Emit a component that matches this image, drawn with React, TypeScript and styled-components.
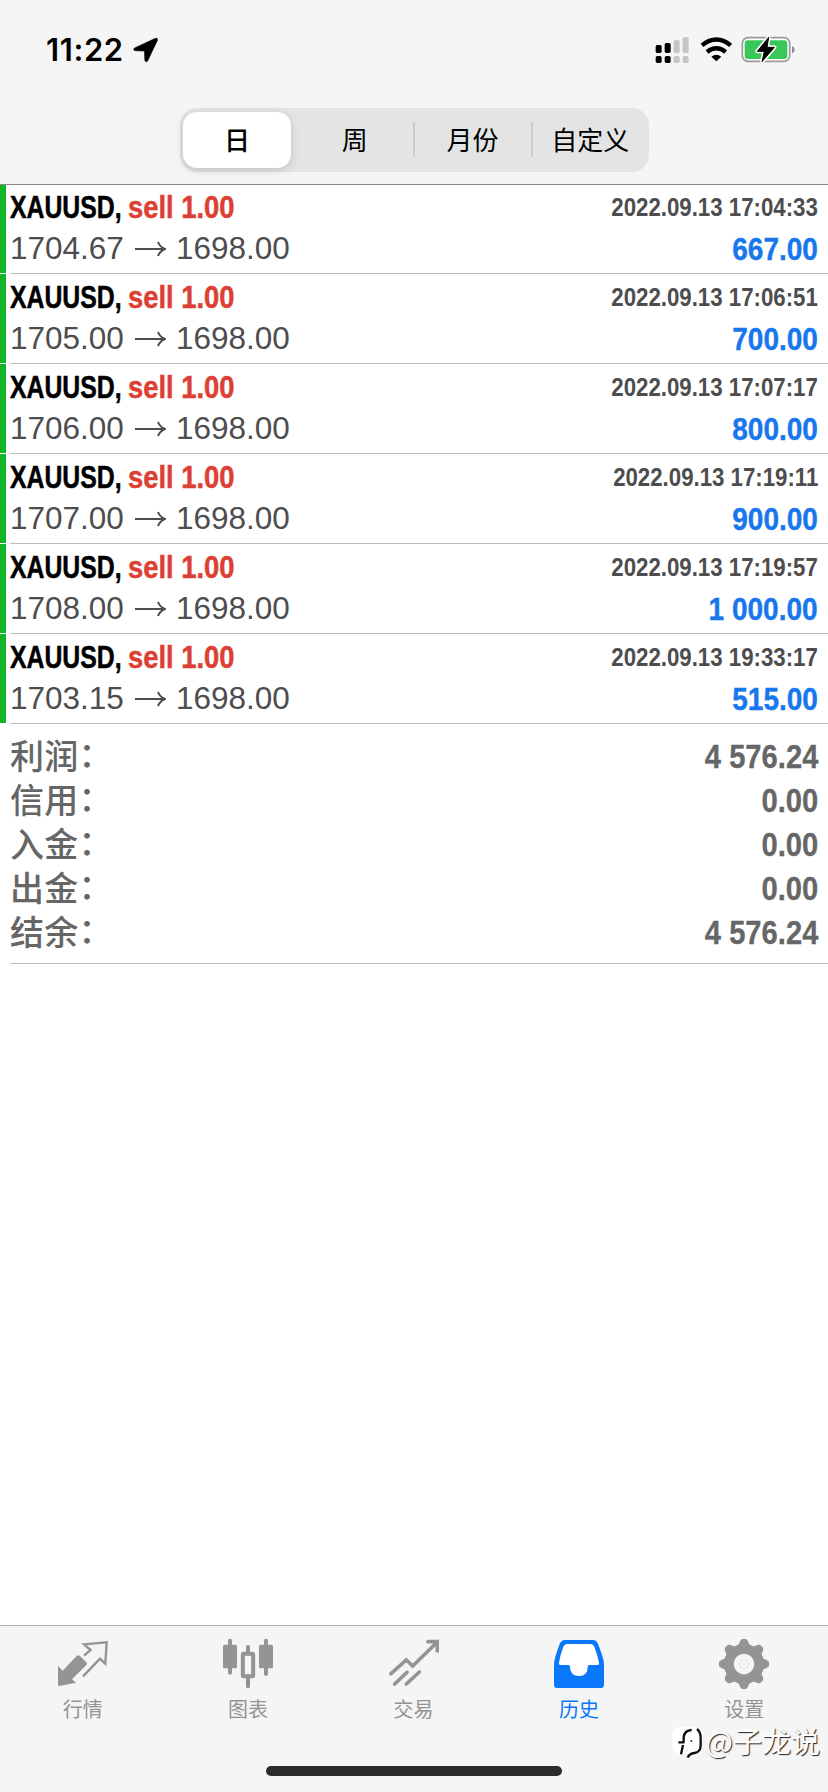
import React from "react";
import styled, { createGlobalStyle } from "styled-components";

const GlobalStyle = createGlobalStyle`
  * { box-sizing: border-box; }
  html, body { margin: 0; padding: 0; background: #fff; }
  body { font-family: "Liberation Sans", "Noto Sans CJK SC", sans-serif; }
`;

const sans = `"Liberation Sans", "Noto Sans CJK SC", sans-serif`;
const cjk = `"Noto Sans CJK SC", sans-serif`;

const Screen = styled.div`
  position: relative;
  display: flex;
  flex-direction: column;
  width: 828px;
  height: 1792px;
  overflow: hidden;
  background: #fff;
`;

const Header = styled.header`
  display: flex;
  flex-direction: column;
  align-items: center;
  height: 185px;
  margin-bottom: -1px;
  z-index: 1;
  flex: none;
  background: #f5f5f5;
  border-bottom: 1px solid #8b8b8b;
`;

const StatusBar = styled.div`
  display: flex;
  justify-content: space-between;
  align-items: center;
  width: 100%;
  height: 108px;
  padding: 0 33px 8px 46px;
`;

const StatusGroup = styled.div`
  display: flex;
  align-items: center;
`;

const Clock = styled.span`
  font: 600 31px/40px Inter, sans-serif;
  letter-spacing: 0.6px;
  color: #000;
  margin-right: 9px;
`;

const Segments = styled.div`
  display: flex;
  align-items: center;
  width: 469px;
  height: 64px;
  padding: 0 0 0 3px;
  border-radius: 17px;
  background: #e4e4e4;
`;

const Segment = styled.button<{ $active?: boolean; $divided?: boolean }>`
  display: flex;
  align-items: center;
  justify-content: center;
  position: relative;
  flex: ${(p) => (p.$active ? "0 0 108px" : "1 1 0")};
  height: 56px;
  padding: 0 0 3px 1px;
  border: 0;
  border-radius: 14px;
  background: ${(p) => (p.$active ? "#fff" : "transparent")};
  box-shadow: ${(p) => (p.$active ? "0 2px 8px rgba(0,0,0,.16)" : "none")};
  margin-right: ${(p) => (p.$active ? "5px" : "0")};
  font: ${(p) => (p.$active ? 500 : 400)} 26px/36px ${cjk};
  color: #000;

  &::before {
    content: "";
    display: ${(p) => (p.$divided ? "block" : "none")};
    position: absolute;
    left: 0;
    top: 10px;
    width: 2px;
    height: 35px;
    background: #cbcbcd;
  }
`;

const Deals = styled.ul`
  list-style: none;
  margin: 0;
  padding: 0;
`;

const Deal = styled.li`
  display: flex;
  height: 90px;
`;

const Marker = styled.span`
  width: 6px;
  height: 89px;
  margin-right: 4px;
  background: #12b428;
`;

const DealBody = styled.div`
  display: flex;
  justify-content: space-between;
  flex: 1;
  padding: 3px 10px 0 0;
  border-bottom: 1px solid #bcbcbe;
`;

const Column = styled.div<{ $end?: boolean }>`
  display: flex;
  flex-direction: column;
  align-items: ${(p) => (p.$end ? "flex-end" : "flex-start")};
`;

const Title = styled.div`
  display: flex;
  font: 700 32px/41px ${sans};
  white-space: nowrap;
  -webkit-text-stroke: 0.5px currentColor;
`;

const Ticker = styled.span`
  width: 118px;
  transform: scaleX(0.775);
  transform-origin: left;
  color: #000;
`;

const Side = styled.span`
  transform: scaleX(0.855);
  transform-origin: left;
  color: #dc3f34;
`;

const Prices = styled.div`
  display: flex;
  align-items: center;
  font: 400 31.5px/41px ${sans};
  color: #4d4d4f;
`;

const ArrowSvg = styled.svg`
  width: 31px;
  height: 16px;
  margin: 0 10px 0 11px;
`;

const DateText = styled.div`
  margin-top: 1px;
  font: 700 25.5px/39px ${sans};
  transform: scaleX(0.872);
  transform-origin: right;
  color: #4d4d4f;
`;

const Profit = styled.div`
  font: 700 32px/45px ${sans};
  transform: scaleX(0.875);
  transform-origin: right;
  -webkit-text-stroke: 0.4px currentColor;
  color: #1877ec;
`;

const Summary = styled.dl`
  margin: 0 0 0 10px;
  padding: 10px 10px 9px 0;
  border-bottom: 1px solid #bcbcbe;
`;

const SummaryRow = styled.div`
  display: flex;
  justify-content: space-between;
  height: 44px;
  color: #666;
`;

const SummaryLabel = styled.dt`
  margin-top: -1px;
  font: 500 34px/44px ${cjk};
  letter-spacing: 0.3px;
`;

const Colon = styled.span`
  position: relative;
  top: -2px;
`;

const SummaryValue = styled.dd`
  margin: 0;
  font: 700 33px/45px ${sans};
  transform: scaleX(0.885);
  transform-origin: right;
  -webkit-text-stroke: 0.3px currentColor;
`;

const TabBar = styled.nav`
  display: flex;
  flex: none;
  height: 167px;
  margin-top: auto;
  padding: 12px 1px 0 0;
  background: #f5f5f5;
  border-top: 1px solid #b3b3b3;
`;

const Tab = styled.a<{ $active?: boolean }>`
  display: flex;
  flex-direction: column;
  align-items: center;
  flex: 1;
  color: ${(p) => (p.$active ? "#0a78fb" : "#949494")};
  font: 400 20px/30px ${cjk};

  svg {
    width: 50px;
    height: 52px;
    margin-bottom: 4px;
  }
`;

const HomeIndicator = styled.div`
  position: absolute;
  left: 266px;
  bottom: 16px;
  width: 296px;
  height: 10px;
  border-radius: 5px;
  background: #2b2b2b;
`;

const Watermark = styled.div`
  position: absolute;
  right: 8px;
  bottom: 32px;
  display: flex;
  align-items: center;
  font: 400 29px/40px ${cjk};
  color: #fff;
  text-shadow: 1px 1px 1px #222;

  svg {
    margin-top: 6px;
  }
`;

const Locate = () => (
  <svg width="25" height="26" viewBox="397 111 76 78">
    <path d="M470 115q3 2 1 6L442 182q-2 5-6 3-3-1-3-5l-1-27-27-1q-5 0-6-4 0-3 5-5l60-28q4-2 6 0z" fill="#000" stroke="#000" strokeWidth="2" />
  </svg>
);

const StatusIcons = () => (
  <svg width="140" height="28" viewBox="721 108 420 84">
    <g fill="#000">
      <rect x="723" y="135" width="18" height="24" rx="5" />
      <rect x="750" y="129" width="18" height="30" rx="5" />
      <rect x="723" y="168" width="18" height="21" rx="5" />
      <rect x="750" y="168" width="18" height="21" rx="5" />
    </g>
    <g fill="#c5c5c5">
      <rect x="777" y="120" width="18" height="39" rx="5" />
      <rect x="804" y="111" width="18" height="48" rx="5" />
      <rect x="777" y="168" width="18" height="21" rx="5" />
      <rect x="804" y="168" width="18" height="21" rx="5" />
    </g>
    <g fill="none" stroke="#000" strokeWidth="13">
      <path d="M862 136q43-35 86 0" />
      <path d="M877 156q28-22 56 0" />
    </g>
    <path d="M890 170q15-11 30 0l-15 14z" fill="#000" />
    <rect x="983" y="113" width="142" height="71" rx="17" fill="#fff" stroke="#999" strokeWidth="5" />
    <rect x="990" y="121" width="128" height="56" rx="10" fill="#3ac759" />
    <path d="M1132 138q8 3 8 11t-8 11z" fill="#94889a" />
    <path d="M1062 112l-34 42h21l-7 31 37-43h-22z" fill="#000" stroke="#fff" strokeWidth="12" strokeLinejoin="round" />
    <path d="M1062 112l-34 42h21l-7 31 37-43h-22z" fill="#000" stroke="#000" strokeWidth="3" strokeLinejoin="round" />
  </svg>
);

const PriceArrow = () => (
  <ArrowSvg viewBox="0 0 31 16" fill="none" stroke="#4d4d4f" strokeWidth="2">
    <path d="M0 8h30M23 1q2 5 7 7q-5 2-7 7" />
  </ArrowSvg>
);

const QuotesIcon = () => (
  <svg viewBox="171 84 150 156">
    <path d="M171 168l14 14 42-44q5-5 10 0l19 19q4 4 0 8l-43 43 12 10-50 10q-4 0-4-4z" fill="currentColor" />
    <path d="M249 137l20-17-20-17 68-6-4 64-16-15-51 53" fill="none" stroke="currentColor" strokeWidth="7" />
  </svg>
);

const ChartIcon = () => (
  <svg viewBox="669 84 150 156" fill="currentColor">
    <rect x="684" y="86" width="12" height="108" rx="6" />
    <rect x="669" y="104" width="42" height="71" rx="5" />
    <rect x="792" y="86" width="12" height="112" rx="6" />
    <rect x="777" y="104" width="42" height="71" rx="5" />
    <rect x="738" y="105" width="12" height="28" rx="6" />
    <rect x="738" y="200" width="12" height="35" rx="6" />
    <rect x="728.500" y="131" width="31" height="68" rx="3" fill="none" stroke="currentColor" strokeWidth="12" />
  </svg>
);

const TradeIcon = () => (
  <svg viewBox="354 84 150 156" fill="none" stroke="currentColor" strokeWidth="11" strokeLinecap="round">
    <path d="M360 191l46-41 19 18 71-69M471 95h28v28" />
    <path d="M371 222l37-35M406 222l39-36" />
  </svg>
);

const HistoryIcon = () => (
  <svg viewBox="45 84 150 156">
    <path d="M78 90h83q12 0 16 12 18 45 18 60v62q0 10-10 10H55q-10 0-10-10v-62q0-15 17-60 5-12 16-12z" fill="currentColor" />
    <path d="M84 102h71q8 0 11 8 10 26 14 48 1 7-6 7h-23q-5 0-5 6 0 27-26 27t-27-27q0-6-5-6H66q-7 0-6-7 3-22 13-48 3-8 11-8z" fill="#fff" />
  </svg>
);

// Eight rounded teeth: a cosine ripple with its crests and valleys flattened.
const gearPath = (() => {
  const pts: string[] = [];
  for (let i = 0; i < 192; i++) {
    const a = (i * Math.PI) / 96;
    const r = 67 + Math.max(-7, Math.min(8, 11 * Math.cos(8 * a)));
    pts.push(`${(618 + r * Math.cos(a)).toFixed(1)} ${(162 + r * Math.sin(a)).toFixed(1)}`);
  }
  return `M${pts.join("L")}Z`;
})();

const SettingsIcon = () => (
  <svg viewBox="543 84 150 156">
    <path d={gearPath} fill="currentColor" />
    <circle cx="618" cy="162" r="31" fill="#f5f5f5" />
    <circle cx="618" cy="162" r="13" fill="none" stroke="#e9e9e9" strokeWidth="3" />
  </svg>
);

const WatermarkLogo = () => (
  <svg width="34" height="34" viewBox="399 352 102 102">
    <path d="M425 354h42q22 0 22 24v34q0 22-22 24h-44q-23-2-23-24v-32q0-24 25-26z" fill="#fff" />
    <path d="M474 361q11 8 11 28v20q0 22-19 24-15 2-20 14" fill="none" stroke="#111" strokeWidth="7" />
    <path d="M458 364q-22 1-24 22v16M432 409l-6 28M418 401h18" fill="none" stroke="#111" strokeWidth="7" />
    <circle cx="457" cy="397" r="3" fill="#333" />
  </svg>
);

const deals = [
  ["1704.67", "2022.09.13 17:04:33", "667.00"],
  ["1705.00", "2022.09.13 17:06:51", "700.00"],
  ["1706.00", "2022.09.13 17:07:17", "800.00"],
  ["1707.00", "2022.09.13 17:19:11", "900.00"],
  ["1708.00", "2022.09.13 17:19:57", "1 000.00"],
  ["1703.15", "2022.09.13 19:33:17", "515.00"],
];

const totals = [
  ["利润", "4 576.24"],
  ["信用", "0.00"],
  ["入金", "0.00"],
  ["出金", "0.00"],
  ["结余", "4 576.24"],
];

export default function App() {
  return (
    <Screen>
      <GlobalStyle />
      <Header>
        <StatusBar>
          <StatusGroup>
            <Clock>11:22</Clock>
            <Locate />
          </StatusGroup>
          <StatusIcons />
        </StatusBar>
        <Segments>
          <Segment $active>日</Segment>
          <Segment>周</Segment>
          <Segment $divided>月份</Segment>
          <Segment $divided>自定义</Segment>
        </Segments>
      </Header>
      <Deals>
        {deals.map(([open, date, profit]) => (
          <Deal key={date}>
            <Marker />
            <DealBody>
              <Column>
                <Title>
                  <Ticker>XAUUSD,</Ticker>
                  <Side>sell 1.00</Side>
                </Title>
                <Prices>
                  {open}
                  <PriceArrow />
                  1698.00
                </Prices>
              </Column>
              <Column $end>
                <DateText>{date}</DateText>
                <Profit>{profit}</Profit>
              </Column>
            </DealBody>
          </Deal>
        ))}
      </Deals>
      <Summary>
        {totals.map(([label, value]) => (
          <SummaryRow key={label}>
            <SummaryLabel>
              {label}
              <Colon>：</Colon>
            </SummaryLabel>
            <SummaryValue>{value}</SummaryValue>
          </SummaryRow>
        ))}
      </Summary>
      <TabBar>
        <Tab><QuotesIcon />行情</Tab>
        <Tab><ChartIcon />图表</Tab>
        <Tab><TradeIcon />交易</Tab>
        <Tab $active><HistoryIcon />历史</Tab>
        <Tab><SettingsIcon />设置</Tab>
      </TabBar>
      <HomeIndicator />
      <Watermark>
        <WatermarkLogo />
        @子龙说
      </Watermark>
    </Screen>
  );
}
